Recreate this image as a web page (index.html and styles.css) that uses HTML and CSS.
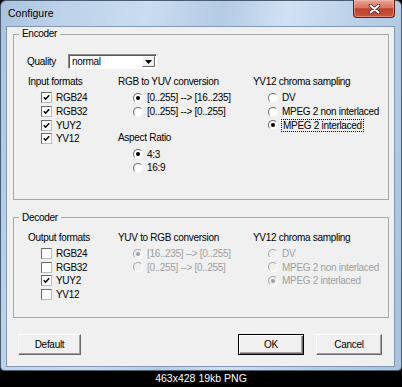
FILE: index.html
```html
<!DOCTYPE html>
<html lang="en">
<head>
  <meta charset="UTF-8" />
  <title>Configure</title>
  <link rel="stylesheet" href="styles.css">
</head>
<body>
  <div class="window">
    <div class="titlebar">
      <span class="title">Configure</span>
      <div class="close-btn">
        <svg width="13" height="10" viewBox="0 0 13 10">
          <path d="M2.5 1.5 L10.5 8.5 M10.5 1.5 L2.5 8.5" stroke="#3a2a2a" stroke-width="3.6" stroke-linecap="round" fill="none"/>
          <path d="M2.5 1.5 L10.5 8.5 M10.5 1.5 L2.5 8.5" stroke="#fff" stroke-width="2" stroke-linecap="round" fill="none"/>
        </svg>
      </div>
    </div>

    <div class="client">
      <fieldset class="group encoder">
        <legend>Encoder</legend>
        <div class="quality">
          <span class="quality-label">Quality</span>
          <div class="combo">
            <span class="combo-text">normal</span>
            <span class="combo-drop">
              <svg width="7" height="4" viewBox="0 0 7 4"><path d="M0 0 H7 L3.5 4 Z" fill="#000"/></svg>
            </span>
          </div>
        </div>
        <div class="cols">
          <div class="col">
            <div class="heading">Input formats</div>
            <div class="opt chk"><span class="box"><svg width="7" height="7" viewBox="0 0 7 7"><path d="M0.8 3.2 L2.6 5.2 L6.2 1.2" stroke="#000" stroke-width="1.5" fill="none"/></svg></span>RGB24</div>
            <div class="opt chk"><span class="box"><svg width="7" height="7" viewBox="0 0 7 7"><path d="M0.8 3.2 L2.6 5.2 L6.2 1.2" stroke="#000" stroke-width="1.5" fill="none"/></svg></span>RGB32</div>
            <div class="opt chk"><span class="box"><svg width="7" height="7" viewBox="0 0 7 7"><path d="M0.8 3.2 L2.6 5.2 L6.2 1.2" stroke="#000" stroke-width="1.5" fill="none"/></svg></span>YUY2</div>
            <div class="opt chk"><span class="box"><svg width="7" height="7" viewBox="0 0 7 7"><path d="M0.8 3.2 L2.6 5.2 L6.2 1.2" stroke="#000" stroke-width="1.5" fill="none"/></svg></span>YV12</div>
          </div>
          <div class="col">
            <div class="heading">RGB to YUV conversion</div>
            <div class="opt rad"><span class="radio on"></span>[0..255] --&gt; [16..235]</div>
            <div class="opt rad"><span class="radio"></span>[0..255] --&gt; [0..255]</div>
            <div class="heading gap">Aspect Ratio</div>
            <div class="opt rad"><span class="radio on"></span>4:3</div>
            <div class="opt rad"><span class="radio"></span>16:9</div>
          </div>
          <div class="col">
            <div class="heading">YV12 chroma sampling</div>
            <div class="opt rad"><span class="radio"></span>DV</div>
            <div class="opt rad"><span class="radio"></span>MPEG 2 non interlaced</div>
            <div class="opt rad"><span class="radio on"></span><span class="focus">MPEG 2 interlaced</span></div>
          </div>
        </div>
      </fieldset>

      <fieldset class="group decoder">
        <legend>Decoder</legend>
        <div class="cols">
          <div class="col">
            <div class="heading">Output formats</div>
            <div class="opt chk"><span class="box"></span>RGB24</div>
            <div class="opt chk"><span class="box"></span>RGB32</div>
            <div class="opt chk"><span class="box"><svg width="7" height="7" viewBox="0 0 7 7"><path d="M0.8 3.2 L2.6 5.2 L6.2 1.2" stroke="#000" stroke-width="1.5" fill="none"/></svg></span>YUY2</div>
            <div class="opt chk"><span class="box"></span>YV12</div>
          </div>
          <div class="col">
            <div class="heading">YUV to RGB conversion</div>
            <div class="opt rad off"><span class="radio on"></span>[16..235] --&gt; [0..255]</div>
            <div class="opt rad off"><span class="radio"></span>[0..255] --&gt; [0..255]</div>
          </div>
          <div class="col">
            <div class="heading">YV12 chroma sampling</div>
            <div class="opt rad off"><span class="radio"></span>DV</div>
            <div class="opt rad off"><span class="radio"></span>MPEG 2 non interlaced</div>
            <div class="opt rad off"><span class="radio on"></span>MPEG 2 interlaced</div>
          </div>
        </div>
      </fieldset>

      <div class="buttons">
        <div class="btn">Default</div>
        <div class="spacer"></div>
        <div class="btn wide primary">OK</div>
        <div class="btn wide">Cancel</div>
      </div>
    </div>
  </div>
  <div class="caption">463x428 19kb PNG</div>
</body>
</html>
```

FILE: styles.css
```css
body {
  margin: 0;
  background-color: #000;
  font-family: "Liberation Sans", Arial, sans-serif;
  font-size: 10px;
  letter-spacing: -0.3px;
  color: #000;
}

.window {
  width: 402px;
  height: 371px;
  box-sizing: border-box;
  border: 1px solid #4a5d72;
  border-radius: 6px 6px 4px 4px;
  padding: 0 6px 3px 5px;
  background: linear-gradient(100deg, #a9c3df 0%, #bdd3ea 14%, #cadcef 32%, #b4cbe5 48%, #d0e1f2 62%, #b7cee7 80%, #a8c2de 100%);
  display: flex;
  flex-direction: column;
}

.titlebar {
  height: 25px;
  display: flex;
  justify-content: space-between;
  align-items: flex-start;
}

.title {
  font-size: 10.5px;
  letter-spacing: 0;
  line-height: 24px;
  padding-left: 2px;
}

.close-btn {
  width: 42px;
  height: 18px;
  box-sizing: border-box;
  margin-top: -1px;
  border: 1px solid #5d2019;
  border-top: none;
  border-radius: 0 0 4px 4px;
  background: linear-gradient(#e6a797 0%, #d7745f 45%, #c2402a 52%, #c9563d 100%);
  box-shadow: inset 0 0 0 1px rgba(255, 200, 190, 0.45);
  display: flex;
  align-items: center;
  justify-content: center;
}

.client {
  flex: 1;
  border: 1px solid #8399b3;
  background-color: #f0f0f0;
  display: flex;
  flex-direction: column;
}

.group {
  margin: 0 5px 0 6px;
  padding: 0;
  border: 1px solid #a8a8a8;
  min-width: 0;
}

.group legend {
  margin-left: 5px;
  padding: 0 3px;
  line-height: 12px;
}

.encoder {
  margin-top: 1px;
  padding-bottom: 24px;
}

.decoder {
  margin-top: 12px;
  padding-bottom: 15px;
}

.quality {
  display: flex;
  align-items: center;
  height: 15px;
  margin-top: 14px;
  padding-left: 13px;
}

.quality-label {
  width: 41px;
}

.combo {
  width: 89px;
  height: 15px;
  box-sizing: border-box;
  background-color: #fff;
  border: 1px solid;
  border-color: #8a8a8a #fff #fff #8a8a8a;
  box-shadow: inset 1px 1px 0 #5a5a5a;
  display: flex;
  align-items: center;
}

.combo-text {
  flex: 1;
  padding-left: 3px;
  line-height: 13px;
}

.combo-drop {
  width: 13px;
  height: 11px;
  box-sizing: border-box;
  margin-right: 1px;
  background-color: #f0f0f0;
  border: 1px solid;
  border-color: #fff #696969 #696969 #fff;
  display: flex;
  align-items: center;
  justify-content: center;
}

.cols {
  display: grid;
  grid-template-columns: 90px 135px 1fr;
  padding-left: 14px;
}

.encoder .cols {
  margin-top: 6px;
}

.decoder .cols {
  margin-top: 7px;
}

.heading {
  height: 14px;
  line-height: 14px;
  margin-bottom: 2px;
  white-space: nowrap;
}

.heading.gap {
  margin-top: 13px;
}

.opt {
  display: flex;
  align-items: center;
  height: 13.7px;
  white-space: nowrap;
}

.opt.chk {
  padding-left: 13px;
}

.opt.rad {
  padding-left: 15px;
}

.box {
  width: 11px;
  height: 11px;
  box-sizing: border-box;
  margin-right: 4px;
  background-color: #fff;
  border: 1px solid;
  border-color: #6a6a6a #bcbcbc #bcbcbc #6a6a6a;
  display: flex;
  align-items: center;
  justify-content: center;
}

.radio {
  width: 10px;
  height: 10px;
  box-sizing: border-box;
  margin-right: 4px;
  border-radius: 50%;
  background-color: #fff;
  border: 1px solid;
  border-color: #6e6e6e #f4f4f4 #f4f4f4 #6e6e6e;
  display: flex;
  align-items: center;
  justify-content: center;
}

.radio.on::after {
  content: "";
  width: 4px;
  height: 4px;
  border-radius: 50%;
  background-color: #000;
}

.focus {
  outline: 1px dotted #000;
  outline-offset: 0;
  padding: 0 1px;
}

.opt.off {
  color: #a0a0a0;
}

.opt.off .radio {
  background-color: #f0f0f0;
  border-color: #a8a8a8 #fff #fff #a8a8a8;
}

.opt.off .radio.on::after {
  background-color: #a0a0a0;
}

.buttons {
  display: flex;
  margin-top: 16px;
  padding: 0 12px 0 11px;
}

.spacer {
  flex: 1;
}

.btn {
  width: 63px;
  height: 21px;
  box-sizing: border-box;
  background-color: #f0f0f0;
  border: 1px solid;
  border-color: #fff #696969 #696969 #fff;
  box-shadow: inset -1px -1px 0 #a0a0a0;
  display: flex;
  align-items: center;
  justify-content: center;
}

.btn.wide {
  width: 66px;
  margin-left: 12px;
}

.btn.primary {
  border-color: #000;
  box-shadow: inset 1px 1px 0 #fff, inset -1px -1px 0 #696969, inset -2px -2px 0 #a0a0a0;
}

.caption {
  height: 16px;
  line-height: 15px;
  text-align: center;
  color: #fff;
  font-size: 10.5px;
  letter-spacing: 0;
}
```
